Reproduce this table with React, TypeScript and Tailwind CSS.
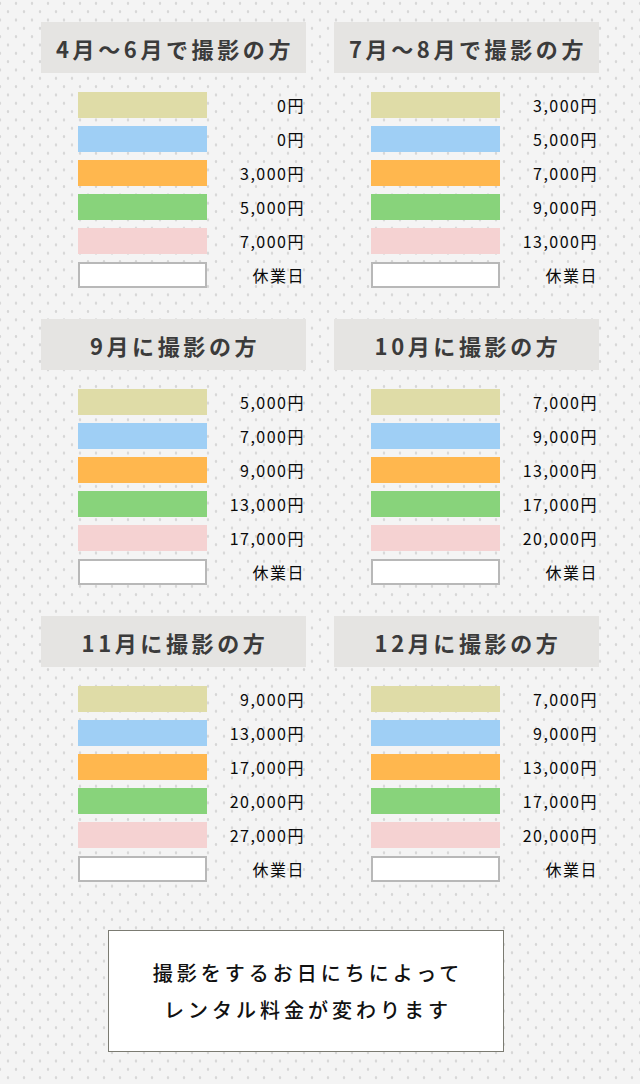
import React from "react";

type Section = { title: string; prices: string[] };

const sections: Section[] = [
  { title: "4月～6月で撮影の方", prices: ["0円", "0円", "3,000円", "5,000円", "7,000円"] },
  { title: "7月～8月で撮影の方", prices: ["3,000円", "5,000円", "7,000円", "9,000円", "13,000円"] },
  { title: "9月に撮影の方", prices: ["5,000円", "7,000円", "9,000円", "13,000円", "17,000円"] },
  { title: "10月に撮影の方", prices: ["7,000円", "9,000円", "13,000円", "17,000円", "20,000円"] },
  { title: "11月に撮影の方", prices: ["9,000円", "13,000円", "17,000円", "20,000円", "27,000円"] },
  { title: "12月に撮影の方", prices: ["7,000円", "9,000円", "13,000円", "17,000円", "20,000円"] },
];

const barClasses = [
  "bg-[#dfdca7]",
  "bg-[#9fcff5]",
  "bg-[#ffb74e]",
  "bg-[#88d37b]",
  "bg-[#f5d2d2]",
];

function Row({ bar, label }: { bar: string; label: string }) {
  return (
    <div className="flex items-center h-[26px]">
      <div className={`ml-[37px] w-[129px] h-[26px] shrink-0 ${bar}`} />
      <div className="flex-1 text-right pr-[1px] text-[16px] leading-none tracking-[1.5px] text-[#0a0a0a]">
        {label}
      </div>
    </div>
  );
}

function PriceSection({ s }: { s: Section }) {
  return (
    <div className="flex flex-col">
      <div className="h-[51px] bg-[#e5e4e2] flex items-center justify-center pl-[3px]">
        <span className="text-[22px] font-bold tracking-[3.6px] text-[#3b3b3b] leading-none">{s.title}</span>
      </div>
      <div className="mt-[19px] flex flex-col gap-[8px]">
        {s.prices.map((p, i) => (
          <Row key={i} bar={barClasses[i]} label={p} />
        ))}
        <div className="flex items-center h-[26px]">
          <div className="ml-[37px] w-[129px] h-[26px] shrink-0 bg-white border-2 border-[#b8b8b8]" />
          <div className="flex-1 text-right pr-[1px] text-[16px] leading-none tracking-[1.5px] text-[#0a0a0a]">
            休業日
          </div>
        </div>
      </div>
    </div>
  );
}

export default function App() {
  return (
    <div className="w-[640px] min-h-[1084px] bg-[#f4f4f4] [background-image:radial-gradient(circle_at_center,#d6d6d6_1px,transparent_1.6px),radial-gradient(circle_at_center,#d6d6d6_1px,transparent_1.6px)] [background-size:16px_16.67px] [background-position:8px_-5px,0px_3.33px] font-['Noto_Sans_CJK_JP','Noto_Sans',sans-serif] pt-[22px]">
      <div className="grid grid-cols-[265px_265px] gap-x-[28px] gap-y-[31px] pl-[41px]">
        {sections.map((s, i) => (
          <PriceSection key={i} s={s} />
        ))}
      </div>
      <div className="ml-[108px] mt-[48px] w-[396px] h-[122px] bg-white border border-[#7b7b72] flex flex-col items-center justify-center">
        <p className="text-[20px] font-medium leading-[37px] tracking-[4px] text-[#111] pl-[4px]">撮影をするお日にちによって</p>
        <p className="text-[20px] font-medium leading-[37px] tracking-[4px] text-[#111] pl-[4px]">レンタル料金が変わります</p>
      </div>
    </div>
  );
}
